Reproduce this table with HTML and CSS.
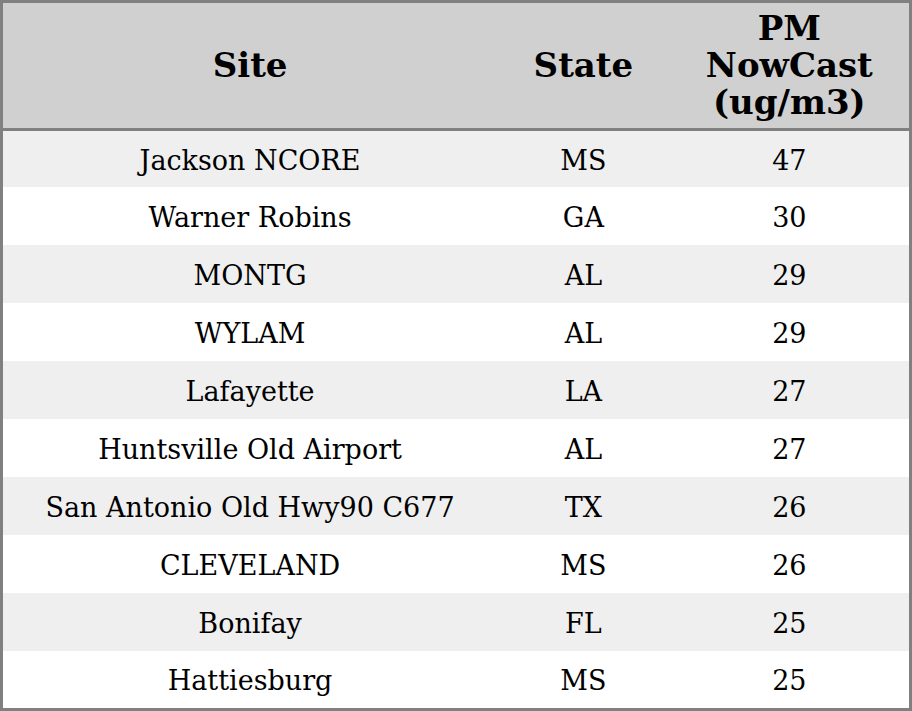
FILE: index.html
```html
<!DOCTYPE html>
<html>
<head>
<meta charset="utf-8">
<link rel="stylesheet" href="styles.css">
</head>
<body>
<table class="aq-table">
  <colgroup>
    <col class="col-site">
    <col class="col-state">
    <col class="col-pm">
  </colgroup>
  <thead>
    <tr class="head-row">
      <th>Site</th>
      <th>State</th>
      <th>PM<br>NowCast<br>(ug/m3)</th>
    </tr>
  </thead>
  <tbody>
    <tr class="row-odd row-first"><td>Jackson NCORE</td><td>MS</td><td>47</td></tr>
    <tr class="row-even"><td>Warner Robins</td><td>GA</td><td>30</td></tr>
    <tr class="row-odd"><td>MONTG</td><td>AL</td><td>29</td></tr>
    <tr class="row-even"><td>WYLAM</td><td>AL</td><td>29</td></tr>
    <tr class="row-odd"><td>Lafayette</td><td>LA</td><td>27</td></tr>
    <tr class="row-even"><td>Huntsville Old Airport</td><td>AL</td><td>27</td></tr>
    <tr class="row-odd"><td>San Antonio Old Hwy90 C677</td><td>TX</td><td>26</td></tr>
    <tr class="row-even"><td>CLEVELAND</td><td>MS</td><td>26</td></tr>
    <tr class="row-odd"><td>Bonifay</td><td>FL</td><td>25</td></tr>
    <tr class="row-even row-last"><td>Hattiesburg</td><td>MS</td><td>25</td></tr>
  </tbody>
</table>
</body>
</html>
```

FILE: styles.css
```css
html, body {
  margin: 0;
  padding: 0;
  background: #ffffff;
}

.aq-table {
  width: 912px;
  border-collapse: collapse;
  border: 3px solid #808080;
  font-family: "DejaVu Serif", serif;
  color: #000000;
  table-layout: fixed;
}

.col-site { width: 494px; }
.col-state { width: 172px; }
.col-pm { width: 240px; }

.head-row {
  background: #d0d0d0;
  border-bottom: 3px solid #808080;
}

.head-row th {
  height: 125px;
  font-size: 34px;
  font-weight: bold;
  line-height: 37px;
  text-align: center;
  vertical-align: middle;
  padding: 0;
}

tbody td {
  height: 55px;
  font-size: 27px;
  line-height: 32px;
  text-align: center;
  vertical-align: middle;
  padding: 3px 0 0 0;
}

.row-first td { height: 53px; }
.row-last td { height: 54px; }

.row-odd { background: #efefef; }
.row-even { background: #ffffff; }
```
